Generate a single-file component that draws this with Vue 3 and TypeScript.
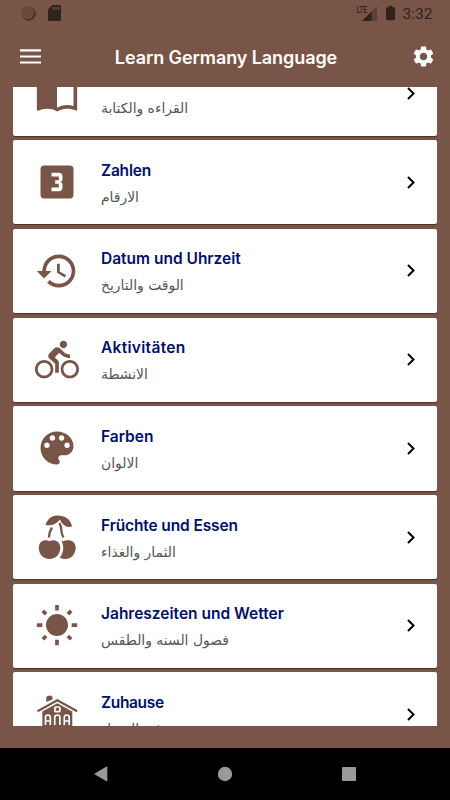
<script setup lang="ts">
interface Lesson {
  key: string
  title: string
  subtitle: string
}

const lessons: Lesson[] = [
  { key: 'book', title: '', subtitle: 'القراءه والكتابة' },
  { key: 'numbers', title: 'Zahlen', subtitle: 'الارقام' },
  { key: 'time', title: 'Datum und Uhrzeit', subtitle: 'الوقت والتاريخ' },
  { key: 'bike', title: 'Aktivitäten', subtitle: 'الانشطة' },
  { key: 'colors', title: 'Farben', subtitle: 'الالوان' },
  { key: 'fruit', title: 'Früchte und Essen', subtitle: 'الثمار والغذاء' },
  { key: 'weather', title: 'Jahreszeiten und Wetter', subtitle: 'فصول السنه والطقس' },
  { key: 'home', title: 'Zuhause', subtitle: 'في المنزل' },
]

const paths: Record<string, string> = {
  book: 'M21 5C19.89 4.65 18.67 4.5 17.5 4.5C15.55 4.5 13.45 4.9 12 6C10.55 4.9 8.45 4.5 6.5 4.5C4.55 4.5 2.45 4.9 1 6V20.65C1 20.9 1.25 21.15 1.5 21.15C1.6 21.15 1.65 21.1 1.75 21.1C3.1 20.45 5.05 20 6.5 20C8.45 20 10.55 20.4 12 21.5C13.35 20.65 15.8 20 17.5 20C19.15 20 20.85 20.3 22.25 21.05C22.35 21.1 22.4 21.1 22.5 21.1C22.75 21.1 23 20.85 23 20.6V6C22.4 5.55 21.75 5.25 21 5M21 18.5C19.9 18.15 18.7 18 17.5 18C15.8 18 13.35 18.65 12 19.5V8C13.35 7.15 15.8 6.5 17.5 6.5C18.7 6.5 19.9 6.65 21 7V18.5Z',
  numbers: 'M15 10.5V9A2 2 0 0 0 13 7H9V9H13V11H11V13H13V15H9V17H13A2 2 0 0 0 15 15V13.5A1.5 1.5 0 0 0 13.5 12A1.5 1.5 0 0 0 15 10.5M19 3A2 2 0 0 1 21 5V19A2 2 0 0 1 19 21H5A2 2 0 0 1 3 19V5A2 2 0 0 1 5 3H19Z',
  time: 'M13.5 8H12V13L16.28 15.54L17 14.33L13.5 12.25V8M13 3A9 9 0 0 0 4 12H1L4.96 16.03L9 12H6A7 7 0 0 1 13 5A7 7 0 0 1 20 12A7 7 0 0 1 13 19C11.07 19 9.32 18.21 8.06 16.94L6.64 18.36C8.27 20 10.5 21 13 21A9 9 0 0 0 22 12A9 9 0 0 0 13 3Z',
  bike: 'M15.5 5.5c1.1 0 2-.9 2-2s-.9-2-2-2-2 .9-2 2 .9 2 2 2zM5 12c-2.8 0-5 2.2-5 5s2.2 5 5 5 5-2.2 5-5-2.2-5-5-5zm0 8.5c-1.9 0-3.5-1.6-3.5-3.5s1.6-3.5 3.5-3.5 3.5 1.6 3.5 3.5-1.6 3.5-3.5 3.5zm5.800-10l2.400-2.400.8.8c1.300 1.300 3 2.100 5.100 2.100V9c-1.500 0-2.700-.6-3.600-1.500l-1.900-1.900c-.5-.4-1-.6-1.600-.6s-1.100.2-1.400.6L7.800 8.400c-.4.4-.6.9-.6 1.400 0 .6.2 1.100.6 1.400L11 14v5h2v-6.200l-2.200-2.300zM19 12c-2.800 0-5 2.200-5 5s2.200 5 5 5 5-2.200 5-5-2.200-5-5-5zm0 8.500c-1.900 0-3.500-1.600-3.500-3.500s1.600-3.500 3.500-3.500 3.500 1.600 3.500 3.500-1.600 3.500-3.500 3.500z',
  colors: 'M12 3c-4.97 0-9 4.03-9 9s4.03 9 9 9c.83 0 1.5-.67 1.5-1.5 0-.39-.15-.74-.39-1.01-.23-.26-.38-.61-.38-.99 0-.83.67-1.5 1.5-1.5H16c2.76 0 5-2.24 5-5 0-4.42-4.03-8-9-8zm-5.5 9c-.83 0-1.5-.67-1.5-1.5S5.67 9 6.5 9 8 9.67 8 10.5 7.33 12 6.5 12zm3-4C8.67 8 8 7.33 8 6.5S8.67 5 9.5 5s1.5.67 1.5 1.5S10.33 8 9.5 8zm5 0c-.83 0-1.5-.67-1.5-1.5S13.67 5 14.5 5s1.5.67 1.5 1.5S15.33 8 14.5 8zm3 4c-.83 0-1.5-.67-1.5-1.5S16.67 9 17.5 9s1.5.67 1.5 1.5-.67 1.5-1.5 1.5z',
  weather: 'M3.55 18.54L4.96 19.95L6.76 18.16L5.34 16.74M11 22.45H13V19.5H11M12 5.5A6 6 0 0 0 6 11.5A6 6 0 0 0 12 17.5A6 6 0 0 0 18 11.5C18 8.18 15.31 5.5 12 5.5M20 12.5H23V10.5H20M17.24 18.16L19.04 19.95L20.45 18.54L18.66 16.74M20.45 4.46L19.04 3.05L17.24 4.84L18.66 6.26M13 .55H11V3.5H13M4 10.5H1V12.5H4M6.76 4.84L4.96 3.05L3.55 4.46L5.34 6.26Z',
}
</script>

<template>
  <div class="screen">
    <div class="status">
      <svg class="status-dot" viewBox="0 0 16 16">
        <circle cx="8.3" cy="8.3" r="7.3" fill="#3d2922" />
        <circle cx="7.3" cy="7.3" r="6.9" fill="#684a3f" stroke="#553b32" stroke-width=".6" stroke-dasharray="1 1" />
      </svg>
      <svg class="status-card" viewBox="0 0 13 16">
        <path d="M4.3 0H11.5Q13 0 13 1.5V14.5Q13 16 11.5 16H1.5Q0 16 0 14.5V4.5Z" fill="#30221d" />
        <path d="M5.5 2V4.8M8 2V4.8M10.5 2V4.8" stroke="#795548" stroke-width="1.3" />
      </svg>
      <span class="spacer"></span>
      <span class="lte">LTE</span>
      <svg class="signal" viewBox="0 0 15 15">
        <path d="M15 0V15H0Z" fill="#5a4036" />
        <path d="M9.5 5.5V15H0Z" fill="#30221d" />
      </svg>
      <svg class="battery" viewBox="0 0 10 16">
        <path d="M3 0H7V1.5H9Q10 1.5 10 2.5V15Q10 16 9 16H1Q0 16 0 15V2.5Q0 1.5 1 1.5H3Z" fill="#30221d" />
      </svg>
      <span class="clock">3:32</span>
    </div>

    <header class="bar">
      <svg class="menu" viewBox="0 0 21 15">
        <path d="M0 1.3H21M0 7.5H21M0 13.5H21" stroke="#fff" stroke-width="2.2" />
      </svg>
      <h1>Learn Germany Language</h1>
      <svg class="gear" viewBox="0 0 24 24">
        <path fill="#fff" d="M19.14 12.94c.04-.3.06-.61.06-.94 0-.32-.02-.64-.07-.94l2.03-1.58c.18-.14.23-.41.12-.61l-1.92-3.32c-.12-.22-.37-.29-.59-.22l-2.39.96c-.5-.38-1.03-.7-1.62-.94l-.36-2.54c-.04-.24-.24-.41-.48-.41h-3.84c-.24 0-.43.17-.47.41l-.36 2.54c-.59.24-1.13.57-1.62.94l-2.39-.96c-.22-.08-.47 0-.59.22L2.74 8.87c-.12.21-.08.47.12.61l2.03 1.58c-.05.3-.09.63-.09.94s.02.64.07.94l-2.03 1.58c-.18.14-.23.41-.12.61l1.92 3.32c.12.22.37.29.59.22l2.39-.96c.5.38 1.03.7 1.62.94l.36 2.54c.05.24.24.41.48.41h3.84c.24 0 .44-.17.47-.41l.36-2.54c.59-.24 1.13-.56 1.62-.94l2.39.96c.22.08.47 0 .59-.22l1.92-3.32c.12-.22.07-.47-.12-.61l-2.01-1.58zM12 15.6c-1.98 0-3.6-1.62-3.6-3.6s1.62-3.6 3.6-3.6 3.6 1.62 3.6 3.6-1.62 3.6-3.6 3.6z" />
      </svg>
    </header>

    <main class="viewport">
      <div class="list">
        <article v-for="l in lessons" :key="l.key" class="card" :class="l.key">
          <svg v-if="paths[l.key]" class="icon" viewBox="0 0 24 24"><path :d="paths[l.key]" /></svg>
          <svg v-else-if="l.key === 'fruit'" class="icon" viewBox="0 0 44 44">
            <path d="M10.5 10C12.500 4 17 .2 22 .5C29 .2 36 4 37 11.5C32 13 27.500 10.500 25 4.500C21.500 9 16.5 11.300 10.5 10Z" />
            <path d="M17 12.500Q14 17 14 22.5M24.500 8Q26.500 12 26.300 15.500Q26.500 19 28.5 22.500" fill="none" stroke="#795548" stroke-width="2.3" />
            <path d="M14.5 26.3C18 24 24.500 25 25.300 32C25.5 39 21 44 14.5 44S3.500 39 3.800 32C4.500 25.500 10.5 24 14.5 26.300Z" />
            <path d="M28.500 26.300C31.500 24.500 39.500 24.300 40.7 31.5C41 39 36.5 44.5 29 44Q26.7 43.700 24.8 42.700Q28.800 37 28.200 31.5Q27.700 28 26.500 25.500Z" />
          </svg>
          <svg v-else class="icon" viewBox="0 0 44 44">
            <path d="M11.2 10V6Q11.2 4.5 12.7 4Q16 2.5 17.5 5V7.500Z" />
            <path d="M2.5 19.300L22.3 8.2L42.2 19.3" fill="none" stroke="#795548" stroke-width="2.2" />
            <path d="M7.3 19.5L22.3 11.3L37.3 19.5V44H7.3Z" />
            <g fill="none" stroke="#fff" stroke-width="1.7">
              <rect x="19.9" y="15" width="5" height="4.7" rx="1" />
              <path d="M10.5 33V25.5Q10.5 23 13 23Q15.3 23 15.3 25.5V33M10.5 29H15.3M19.7 33V25.5Q19.7 23 22.3 23Q24.9 23 24.9 25.5V33M29.3 33V25.5Q29.3 23 31.7 23Q34.2 23 34.2 25.5V33M29.3 29H34.2" />
            </g>
          </svg>
          <div class="text">
            <h2>{{ l.title }}</h2>
            <p><bdi>{{ l.subtitle }}</bdi></p>
          </div>
          <svg class="chevron" viewBox="0 0 8 13"><path d="M1 1L6.5 6.5L1 12" /></svg>
        </article>
      </div>
    </main>

    <nav class="nav">
      <svg viewBox="0 0 14 16"><path d="M0 8L12.5 .6Q13.3 .3 13.3 1.2V14.8Q13.3 15.7 12.5 15.3Z" /></svg>
      <svg viewBox="0 0 14 16"><circle cx="7" cy="8" r="7.2" /></svg>
      <svg viewBox="0 0 14 16"><rect y="1" width="14" height="14" rx="1" /></svg>
    </nav>
  </div>
</template>

<style>
body {
  margin: 0;
}
</style>

<style scoped>
.screen {
  display: flex;
  flex-direction: column;
  width: 450px;
  height: 800px;
  overflow: hidden;
  background: #795548;
  font-family: Inter, 'Open Sans', sans-serif;
}
svg {
  display: block;
  flex: none;
  overflow: visible;
}
.status {
  display: flex;
  align-items: center;
  flex: none;
  height: 26px;
  padding: 0 17.5px 0 21px;
  color: #30221d;
}
.status-dot {
  width: 15px;
  height: 15px;
}
.status-card {
  width: 13px;
  height: 16px;
  margin-left: 12px;
}
.spacer {
  flex: 1;
}
.lte {
  align-self: flex-start;
  margin: 5px -6px 0 0;
  font: 500 9.5px/9px Roboto, sans-serif;
  transform: scaleX(.68);
  transform-origin: right;
}
.signal {
  width: 15px;
  height: 15px;
}
.battery {
  width: 9px;
  height: 16px;
  margin: 0 8px 0 9px;
}
.clock {
  padding-top: 2px;
  font: 400 15.5px/18px Roboto, sans-serif;
}
.bar {
  display: flex;
  align-items: center;
  justify-content: space-between;
  flex: none;
  height: 61px;
  padding: 0 14px 0 20px;
  box-sizing: border-box;
}
.menu {
  width: 21px;
  height: 15px;
}
.gear {
  width: 25px;
  height: 25px;
}
h1 {
  margin: 2px 0 0;
  color: #fff;
  font-size: 18px;
  font-weight: 600;
  line-height: 24px;
  letter-spacing: -.08px;
}
.viewport {
  flex: none;
  height: 639px;
  margin: 0 13px;
  overflow: hidden;
}
.list {
  display: flex;
  flex-direction: column;
  gap: 4.4px;
  margin-top: -35.6px;
}
.card {
  display: flex;
  align-items: center;
  flex: none;
  height: 84.32px;
  padding: 0 22.5px 0 22px;
  box-sizing: border-box;
  border-radius: 2px;
  background: #fff;
  box-shadow: 0 1px 1px rgba(50, 20, 5, .55);
}
.icon {
  width: 44px;
  height: 44px;
  fill: #795548;
}
.text {
  flex: 1;
  margin: 3px 0 0 22px;
}
h2 {
  height: 24px;
  margin: 0;
  color: #00106b;
  font-size: 15.5px;
  font-weight: 600;
  line-height: 24px;
  white-space: nowrap;
}
.numbers h2 {
  letter-spacing: -.2px;
}
.bike h2 {
  letter-spacing: .3px;
}
.fruit h2 {
  letter-spacing: -.12px;
}
.home h2 {
  letter-spacing: -.35px;
}
p {
  margin: 2px 0 0;
  color: #555;
  font: 13.9px/24px 'DejaVu Sans', sans-serif;
}
.chevron {
  width: 8px;
  height: 13px;
}
.chevron path {
  fill: none;
  stroke: #000;
  stroke-width: 2;
}
.nav {
  display: flex;
  align-items: center;
  justify-content: space-between;
  flex: none;
  height: 52.5px;
  margin-top: auto;
  padding: 0 94px;
  background: #000;
}
.nav svg {
  width: 14px;
  height: 16px;
  fill: #999;
}
</style>
